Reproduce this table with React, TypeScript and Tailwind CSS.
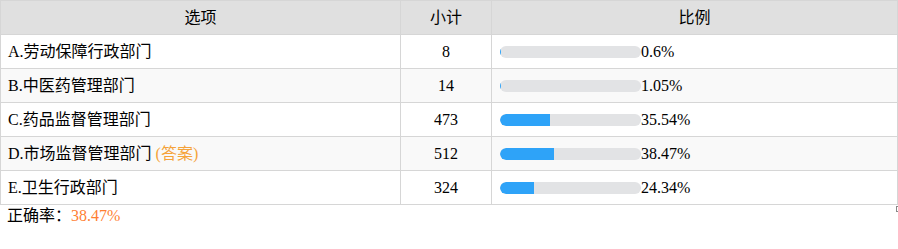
import React from "react";

const rows = [
  { label: "A.劳动保障行政部门", count: 8, pct: 0.6, text: "0.6%" },
  { label: "B.中医药管理部门", count: 14, pct: 1.05, text: "1.05%" },
  { label: "C.药品监督管理部门", count: 473, pct: 35.54, text: "35.54%" },
  { label: "D.市场监督管理部门", count: 512, pct: 38.47, text: "38.47%", answer: true },
  { label: "E.卫生行政部门", count: 324, pct: 24.34, text: "24.34%" },
];

export default function App() {
  return (
    <div
      className="relative w-[898px] h-[249px] bg-white text-[16px] text-black"
      style={{ fontFamily: '"Liberation Serif", "Noto Sans CJK SC", serif' }}
    >
      <table className="table-fixed border-collapse w-[897px]">
        <colgroup>
          <col className="w-[400px]" />
          <col className="w-[91px]" />
          <col className="w-[406px]" />
        </colgroup>
        <thead>
          <tr className="h-[34px] bg-[#e0e0e0]">
            <th className="border border-[#d6d6d6] font-normal text-center p-0">选项</th>
            <th className="border border-[#d6d6d6] font-normal text-center p-0">小计</th>
            <th className="border border-[#d6d6d6] font-normal text-center p-0">比例</th>
          </tr>
        </thead>
        <tbody>
          {rows.map((r, i) => (
            <tr key={i} className={`h-[34px] ${i % 2 === 1 ? "bg-[#f9f9f9]" : "bg-white"}`}>
              <td className="border border-[#d6d6d6] pl-[7px] py-0">
                {r.label}
                {r.answer && <span className="text-[#f5a33a]"> (答案)</span>}
              </td>
              <td className="border border-[#d6d6d6] text-center p-0">{r.count}</td>
              <td className="border border-[#d6d6d6] pl-[8px] py-0">
                <div className="flex items-center">
                  <div className="w-[141px] h-[12px] rounded-full bg-[#e2e3e5] overflow-hidden">
                    <div className="h-full rounded-l-full bg-[#2ea3f8]" style={{ width: `${r.pct}%` }} />
                  </div>
                  <span>{r.text}</span>
                </div>
              </td>
            </tr>
          ))}
        </tbody>
      </table>
      <div className="pl-[7px] leading-[20px] mt-[1px]">
        正确率：<span className="text-[#ff7f33]">38.47%</span>
      </div>
      <div className="absolute left-[896px] top-[206px] w-[2px] h-[6px] border border-r-0 border-[#888]" />
    </div>
  );
}
